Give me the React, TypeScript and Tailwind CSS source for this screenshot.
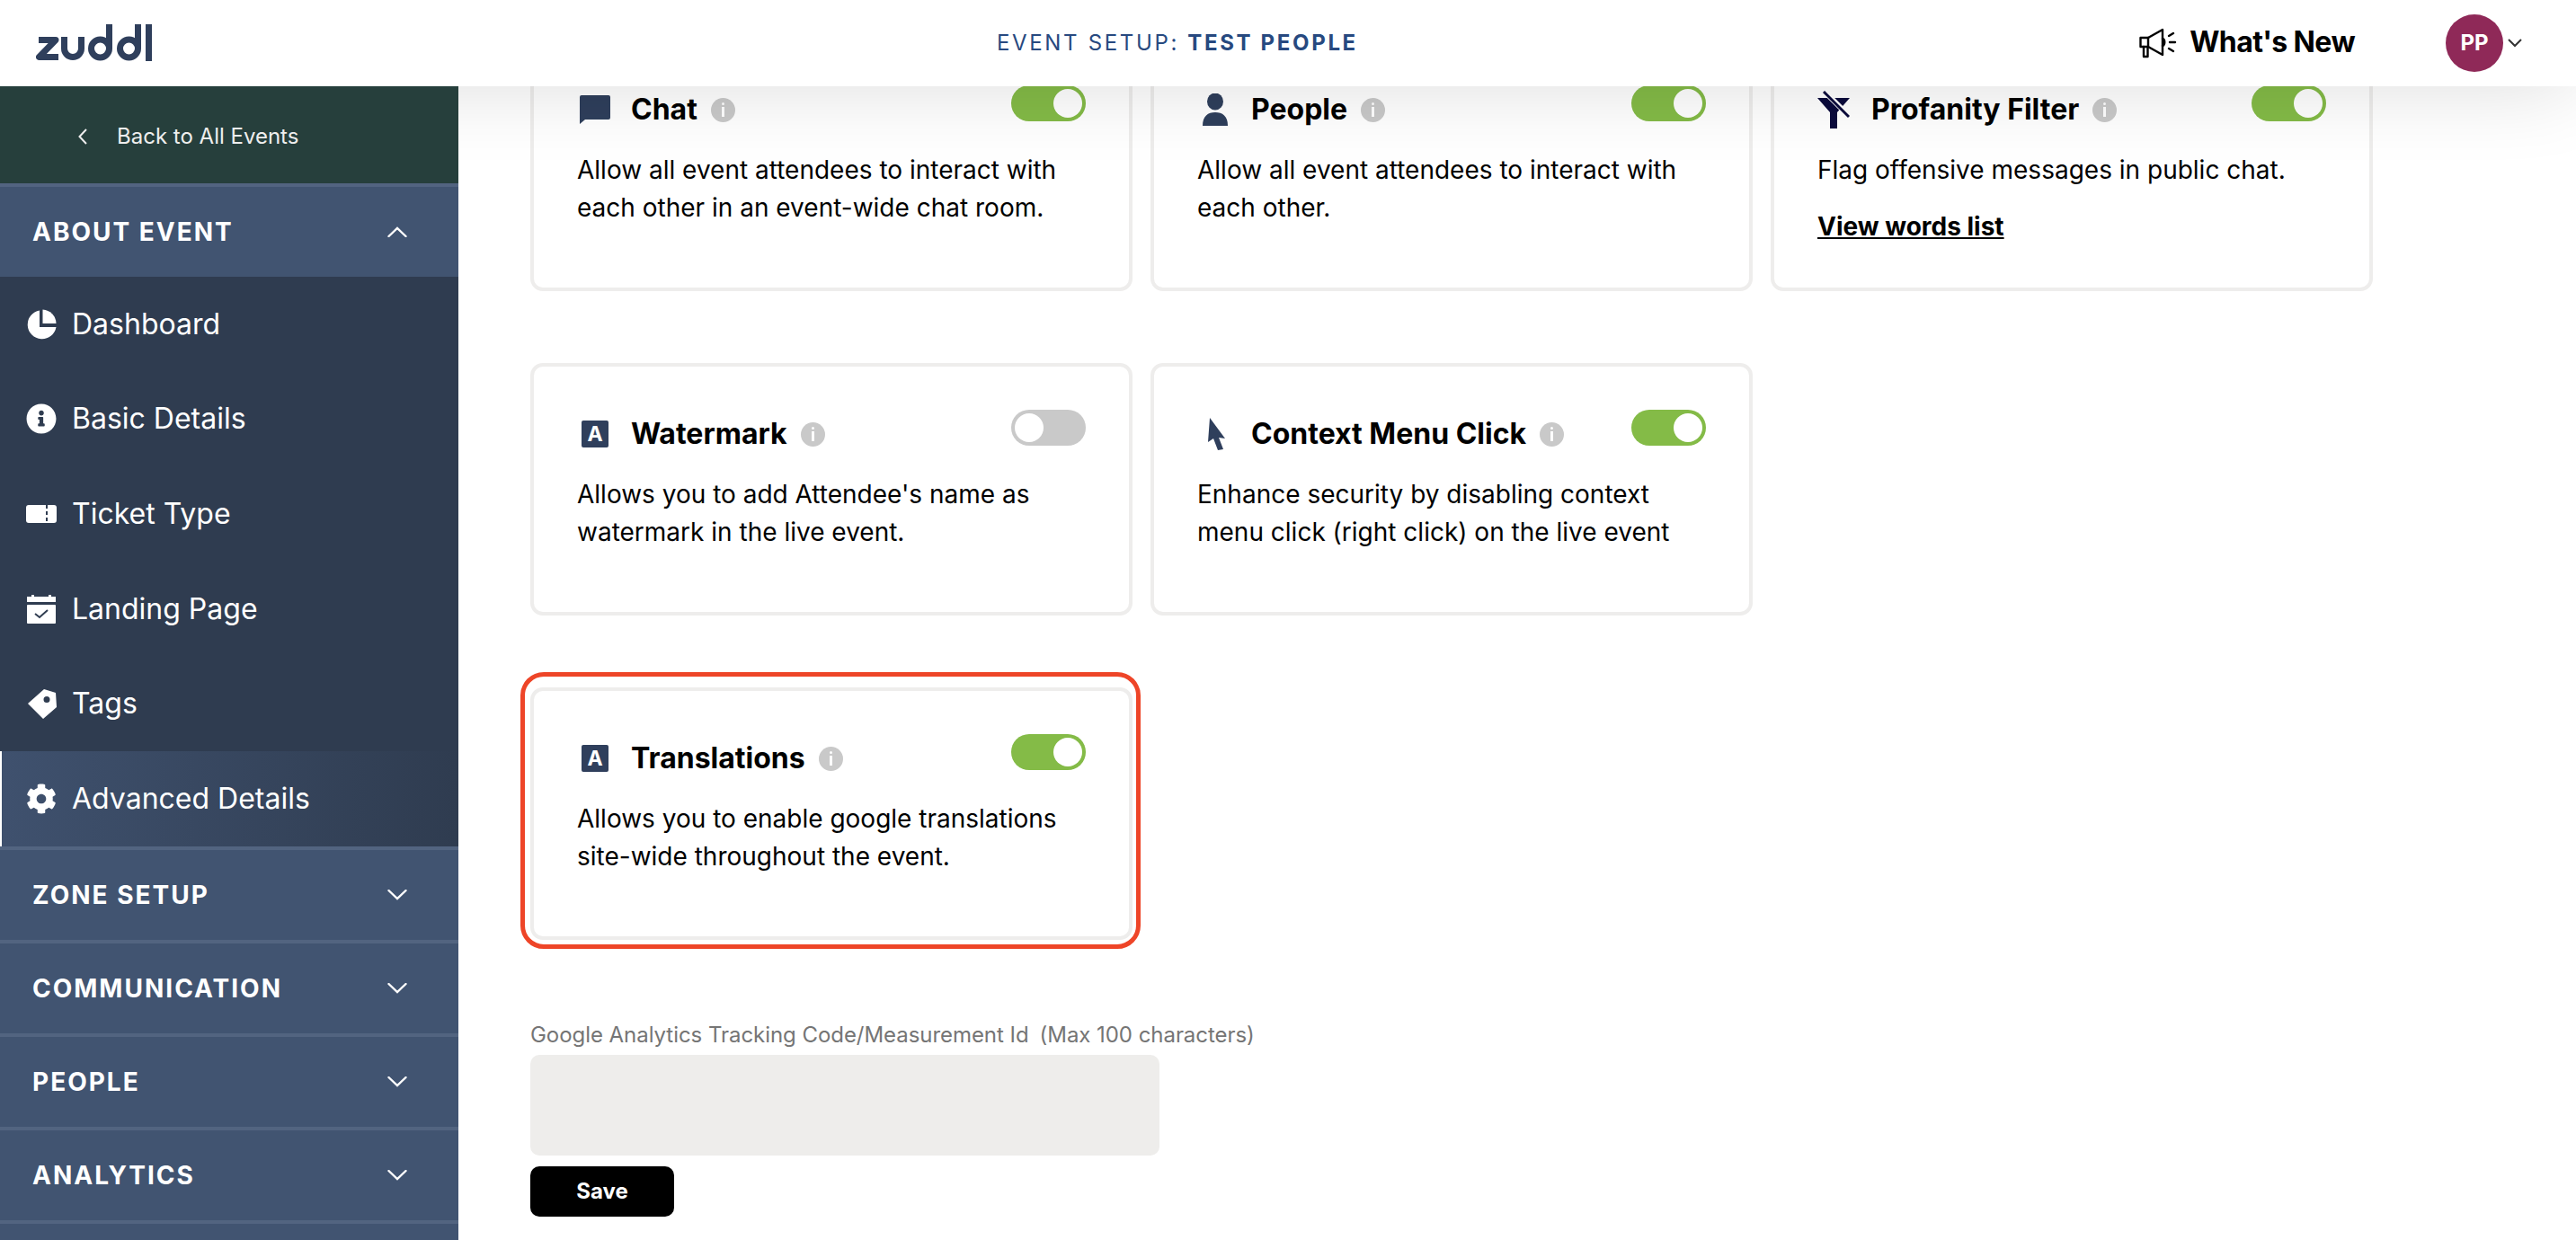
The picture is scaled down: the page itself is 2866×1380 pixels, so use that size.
import { FaCog, FaInfoCircle } from 'react-icons/fa'

const navItems = [
    { label: 'Dashboard', icon: <PieIcon /> },
    { label: 'Basic Details', icon: <FaInfoCircle className="w-[34px] h-[34px]" /> },
    { label: 'Ticket Type', icon: <TicketIcon /> },
    { label: 'Landing Page', icon: <CalendarIcon /> },
    { label: 'Tags', icon: <TagIcon /> },
    { label: 'Advanced Details', icon: <FaCog className="w-[34px] h-[34px]" />, active: true },
]

const groups = ['ZONE SETUP', 'COMMUNICATION', 'PEOPLE', 'ANALYTICS']

function Logo() {
    return (
        <svg width="130" height="42" viewBox="0 0 130 42" fill="none" stroke="#2f3f5c" strokeWidth="7" strokeLinejoin="round" className="ml-10">
            <path d="M3 17.5 H22 L3.5 36.5 H25" />
            <path d="M31.5 14 V27 A 9.5 9.5 0 0 0 50.5 27 V14" />
            <circle cx="71.5" cy="27" r="10" />
            <path d="M81.5 0 V27" />
            <circle cx="103.5" cy="27" r="10" />
            <path d="M113.5 0 V27" />
            <path d="M125.5 0 V41" />
        </svg>
    )
}

function Megaphone() {
    return (
        <svg width="42" height="34" viewBox="0 0 42 34" fill="none" stroke="#000" strokeWidth="2.4" strokeLinejoin="round" strokeLinecap="round">
            <path d="M1.5 11 H10 L26 2 V30 L10 21 H1.5 Z" />
            <path d="M10 11 V21" />
            <path d="M5 21 V32 H9.5 V22" />
            <path d="M26 12 C29 13 29 19 26 20" />
            <path d="M33 9 L38 6 M34 16 H40 M33 23 L38 26" />
        </svg>
    )
}

function PieIcon() {
    return (
        <svg width="34" height="34" viewBox="0 0 34 34">
            <path d="M15 1.5 A16 16 0 1 0 33.5 20 H15 Z" fill="#fff" />
            <path d="M18.5 0.5 A16 16 0 0 1 33.5 16 H18.5 Z" fill="#fff" />
        </svg>
    )
}

function TicketIcon() {
    return (
        <svg width="34" height="34" viewBox="0 0 34 34">
            <rect x="0" y="7" width="34" height="20" rx="3" fill="#fff" />
            <path d="M23 7 V27" stroke="#2f3c50" strokeWidth="2" strokeDasharray="4 3" />
        </svg>
    )
}

function CalendarIcon() {
    return (
        <svg width="34" height="34" viewBox="0 0 34 34">
            <path d="M1 3 H6 V1 H9 V3 H25 V1 H28 V3 H33 V9 H1 Z" fill="#fff" />
            <rect x="1" y="12" width="32" height="21" rx="1" fill="#fff" />
            <path d="M10 22 L15 26 L24 18" fill="none" stroke="#2f3c50" strokeWidth="2" />
        </svg>
    )
}

function TagIcon() {
    return (
        <svg width="34" height="34" viewBox="0 0 34 34">
            <path fillRule="evenodd" d="M2 17 L20 1 L33 5 L34 21 L19 34 Z M23 9 A3.5 3.5 0 1 0 23 16 A3.5 3.5 0 1 0 23 9 Z" fill="#fff" />
        </svg>
    )
}

function Chevron({ up }: { up?: boolean }) {
    return (
        <svg width="22" height="12" viewBox="0 0 22 12" fill="none" stroke="#fff" strokeWidth="2.4" strokeLinecap="round">
            <path d={up ? 'M1.5 11 L11 2 L20.5 11' : 'M1.5 1 L11 10 L20.5 1'} />
        </svg>
    )
}

function ChatIcon() {
    return (
        <svg width="34" height="32" viewBox="0 0 34 32" className="ml-[3px]">
            <path d="M2 0 H32 A2 2 0 0 1 34 2 V25 A2 2 0 0 1 32 27 H6 L0 32 V2 A2 2 0 0 1 2 0 Z" fill="#2f3f5c" />
        </svg>
    )
}

function PersonIcon() {
    return (
        <svg width="28" height="36" viewBox="0 0 28 36" className="ml-[6px]">
            <ellipse cx="14" cy="9" rx="9" ry="9.5" fill="#2f3f5c" />
            <path d="M0 36 C0 25 6 21 14 21 C22 21 28 25 28 36 Z" fill="#2f3f5c" />
        </svg>
    )
}

function FilterIcon() {
    return (
        <svg width="36" height="42" viewBox="0 0 36 42">
            <path d="M0 8 H36 L22 24 V42 H14 V24 Z" fill="#0a0a3c" />
            <path d="M6 -1 L37 30" stroke="#fff" strokeWidth="6" />
            <path d="M7 1 L35 29" stroke="#0a0a3c" strokeWidth="3" />
        </svg>
    )
}

function LetterIcon() {
    return (
        <span className="ml-[5px] w-[30px] h-[30px] bg-[#2f3f5c] rounded-[2px] flex items-center justify-center text-white text-[23px] font-bold leading-none">A</span>
    )
}

function CursorIcon() {
    return (
        <svg width="24" height="36" viewBox="0 0 24 36" className="ml-[11px]">
            <path d="M3 0 L20 23 L13 22 L18 35 L12 36 L7 23 L1 27 Z" fill="#2f3f5c" />
        </svg>
    )
}

function InfoDot() {
    return (
        <span className="ml-[15px] w-[27px] h-[27px] rounded-full bg-[#c9c9c9] flex flex-col items-center justify-center gap-[2px] shrink-0">
            <span className="w-[3px] h-[3px] rounded-full bg-white" />
            <span className="w-[3px] h-[11px] bg-white" />
        </span>
    )
}

function Toggle({ on = true }: { on?: boolean }) {
    return (
        <span className={`w-[83px] h-[40px] rounded-full flex items-center px-1 shrink-0 ${on ? 'bg-[#84bb47] justify-end' : 'bg-[#c9c9c9] justify-start'}`}>
            <span className="w-[32px] h-[32px] rounded-full bg-white" />
        </span>
    )
}

function Card({ icon, title, text, on, link, boxed }: { icon: React.ReactNode; title: string; text: string; on?: boolean; link?: string; boxed?: boolean }) {
    return (
        <div className="relative h-[281px] border-4 border-[#eeedec] rounded-[14px] bg-white pt-[48px] pl-[48px] pr-[48px]">
            {boxed && <span className="absolute -top-[21px] -left-[15px] -right-[13px] -bottom-[14px] border-[5px] border-[#ee4528] rounded-[26px]" />}
            <div className="flex items-start justify-between">
                <div className="flex items-center h-[38px] mt-2">
                    <span className="w-[60px] shrink-0 flex items-center">{icon}</span>
                    <span className="text-[32px] font-bold text-black leading-[38px]">{title}</span>
                    <InfoDot />
                </div>
                <Toggle on={on} />
            </div>
            <p className="mt-[27px] text-[28px] leading-[42px] text-black">{text}</p>
            {link && <a className="block mt-[21px] text-[28px] leading-[42px] font-bold text-black underline">{link}</a>}
        </div>
    )
}

export default function App() {
    return (
        <div className="w-screen h-screen overflow-hidden bg-white flex flex-col font-['Inter',sans-serif]">
            {/* Header */}
            <header className="relative z-10 h-[96px] shrink-0 bg-white flex items-center shadow-[0_0_90px_rgba(0,0,0,0.14)]">
                <div className="w-[1109px] shrink-0"><Logo /></div>
                <div className="text-[24px] tracking-[2.65px] text-[#27497f] whitespace-nowrap">
                    EVENT SETUP: <span className="font-bold">TEST PEOPLE</span>
                </div>
                <div className="ml-auto flex items-center pr-[60px]">
                    <Megaphone />
                    <span className="ml-[14px] mb-[2px] text-[32px] font-bold tracking-[-0.6px] text-black">What's New</span>
                    <span className="ml-[101px] w-[64px] h-[64px] rounded-full bg-[#8f2958] text-white text-[24px] font-bold flex items-center justify-center">PP</span>
                    <svg width="16" height="10" viewBox="0 0 16 10" fill="none" stroke="#333" strokeWidth="2" className="ml-[5px]">
                        <path d="M1 1 L8 8 L15 1" />
                    </svg>
                </div>
            </header>

            <div className="flex flex-1 min-h-0">
                {/* Sidebar */}
                <aside className="relative z-20 w-[510px] shrink-0 bg-[#2f3c50] text-white overflow-hidden">
                    <div className="h-[108px] bg-[#263f3c] flex items-center pl-[87px] pt-1">
                        <svg width="10" height="18" viewBox="0 0 10 18" fill="none" stroke="#eee" strokeWidth="2">
                            <path d="M9 1 L1.5 9 L9 17" />
                        </svg>
                        <span className="ml-[33px] text-[24px] text-[#eeeeee]">Back to All Events</span>
                    </div>
                    <div className="h-[104px] border-t-4 border-[#526480] bg-[#415471] flex items-center justify-between pl-[36px] pr-[57px]">
                        <span className="text-[28px] font-bold tracking-[2px]">ABOUT EVENT</span>
                        <Chevron up />
                    </div>
                    {navItems.map(item => (
                        <div
                            key={item.label}
                            className={`h-[105.6px] flex items-center gap-[17px] text-[32px] ${item.active ? 'pl-[27px] border-l-2 border-white bg-gradient-to-r from-[#3f516e] to-[#2f3c50]' : 'pl-[29px]'}`}
                        >
                            {item.icon}
                            <span>{item.label}</span>
                        </div>
                    ))}
                    {groups.map(g => (
                        <div key={g} className="h-[104px] border-t-4 border-[#526480] bg-[#415471] flex items-center justify-between pl-[36px] pr-[57px]">
                            <span className="text-[28px] font-bold tracking-[2px]">{g}</span>
                            <Chevron />
                        </div>
                    ))}
                    <div className="h-[104px] border-t-4 border-[#526480] bg-[#415471]" />
                </aside>

                {/* Main */}
                <main className="flex-1 min-w-0 overflow-hidden pl-[80px]">
                    <div className="-mt-[53px] grid grid-cols-[repeat(3,670px)] gap-x-5 gap-y-[80px]">
                        <Card icon={<ChatIcon />} title="Chat" text="Allow all event attendees to interact with each other in an event-wide chat room." />
                        <Card icon={<PersonIcon />} title="People" text="Allow all event attendees to interact with each other." />
                        <Card icon={<FilterIcon />} title="Profanity Filter" text="Flag offensive messages in public chat." link="View words list" />
                        <Card icon={<LetterIcon />} title="Watermark" on={false} text="Allows you to add Attendee's name as watermark in the live event." />
                        <Card icon={<CursorIcon />} title="Context Menu Click" text="Enhance security by disabling context menu click (right click) on the live event" />
                        <div className="col-start-1">
                            <Card icon={<LetterIcon />} title="Translations" boxed text="Allows you to enable google translations site-wide throughout the event." />
                        </div>
                    </div>

                    <label className="block mt-[89px] text-[24px] leading-[34px] tracking-[-0.05px] text-[#757575]">
                        Google Analytics Tracking Code/Measurement Id<span className="ml-3">(Max 100 characters)</span>
                    </label>
                    <div className="mt-[5px] w-[700px] h-[112px] rounded-[10px] bg-[#eeedeb]" />
                    <button className="mt-3 w-[160px] h-[56px] rounded-[10px] bg-black text-white text-[24px] font-bold">Save</button>
                </main>
            </div>
        </div>
    )
}
